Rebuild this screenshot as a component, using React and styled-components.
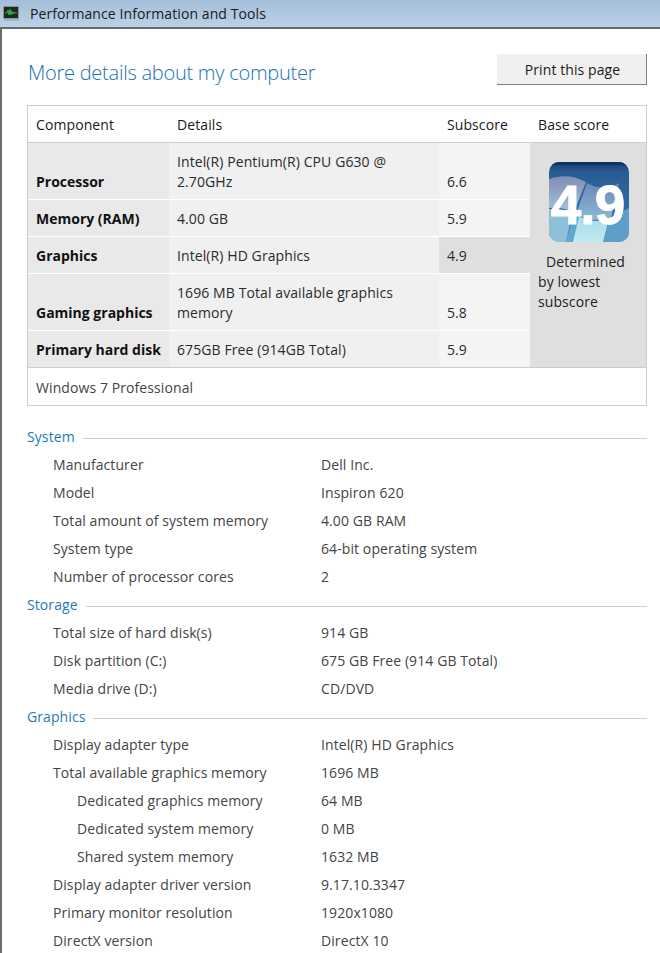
import React from "react";
import styled, { createGlobalStyle } from "styled-components";

const Global = createGlobalStyle`
  html, body { margin: 0; padding: 0; background: #fff; height: 953px; overflow: hidden; }
  body { font-family: "Open Sans", "Noto Sans", "Liberation Sans", sans-serif; font-size: 14px; letter-spacing: 0.09px; color: #111; }
`;

const Page = styled.div`
  width: 660px;
  height: 953px;
  overflow: hidden;
  display: flex;
  flex-direction: column;
`;
const TitleBar = styled.header`
  flex: none;
  height: 27px;
  display: flex;
  align-items: center;
  gap: 10px;
  padding-left: 3px;
  background: linear-gradient(#a4bdd9, #bcd1e7);
  border-bottom: 2px solid #6b6b6b;
  color: #1a1a1a;
  font-size: 14px;
`;
const Body = styled.main`
  flex: 1;
  border-left: 2px solid #6b6b6b;
  padding: 25px 13px 0 25px;
  display: flex;
  flex-direction: column;
`;
const TopRow = styled.div`
  display: flex;
  justify-content: space-between;
  align-items: flex-start;
  height: 51px;
`;
const Heading = styled.h1`
  margin: 5px 0 0 1px;
  font-size: 20px;
  line-height: 28px;
  font-weight: 300;
  letter-spacing: -0.25px;
  color: #1872b4;
`;
const PrintButton = styled.button`
  width: 150px;
  height: 31px;
  padding: 1px 0 0 2px;
  border: none;
  border-right: 1px solid #7d7d7d;
  border-bottom: 1px solid #7d7d7d;
  background: #f0f0f0;
  font: inherit;
  letter-spacing: inherit;
  color: #1a1a1a;
`;
const Card = styled.section`
  border: 1px solid #cdcdcd;
  display: grid;
  grid-template-columns: 141px 270px 91px 116px;
  grid-template-rows: 36px repeat(5, auto) 37px;
  row-gap: 1px;
  background: #fff;
`;
const HeadCell = styled.div`
  padding: 9px 8px 7px;
  line-height: 20px;
  border-bottom: 1px solid #cdcdcd;
  height: 37px;
  margin-bottom: -1px;
  box-sizing: border-box;
  color: #1a1a1a;
`;
const Cell = styled.div`
  padding: 9px 8px 7px;
  line-height: 20px;
  display: flex;
  align-items: flex-end;
  background: ${p => p.$bg};
  font-weight: ${p => (p.$bold ? 700 : 400)};
  letter-spacing: ${p => (p.$bold ? "0" : "inherit")};
  color: ${p => (p.$bold ? "#111" : "#2b2b2b")};
`;
const BaseCell = styled.div`
  grid-column: 4;
  grid-row: 2 / span 5;
  background: #dfdfdf;
  display: flex;
  flex-direction: column;
  padding: 19px 8px 0;
  color: #222;
  line-height: 20px;
`;
const Badge = styled.div`
  position: relative;
  width: 80px;
  height: 80px;
  margin: 0 0 10px 11px;
`;
const BadgeArt = styled.svg`
  display: block;
`;
const BadgeScore = styled.span`
  position: absolute;
  inset: 6px 3px 0 0;
  display: flex;
  align-items: center;
  justify-content: center;
  font-family: "Liberation Sans", sans-serif;
  font-size: 55px;
  font-weight: 700;
  letter-spacing: -1px;
  -webkit-text-stroke: 0.8px #fff;
  color: #fff;
`;
const Note = styled.p`
  margin: 0;
  text-indent: 8px;
`;
const Edition = styled.div`
  grid-column: 1 / -1;
  padding: 2px 8px 0;
  border-top: 1px solid #cdcdcd;
  display: flex;
  align-items: center;
  color: #444;
  margin-top: -1px;
`;
const Sections = styled.div`
  margin-top: 16px;
  display: flex;
  flex-direction: column;
`;
const SectionTitle = styled.div`
  height: 28px;
  display: flex;
  align-items: center;
  gap: 8px;
  color: #1f7bb8;
  &::after {
    content: "";
    flex: 1;
    height: 1px;
    margin-top: 4px;
    background: #cdcdcd;
  }
`;
const Row = styled.div`
  height: 28px;
  display: grid;
  grid-template-columns: ${p => (p.$indent ? "244px" : "268px")} 1fr;
  align-items: center;
  padding-left: ${p => (p.$indent ? "50px" : "26px")};
  color: #444;
`;

const Monitor = () => (
  <svg width="17" height="15" viewBox="0 0 17 15">
    <rect x="0.5" y="0.5" width="15" height="12" rx="1" fill="#1c2a20" stroke="#8a9696" />
    <path d="M2 7h2l1-3 1 5 1-6 1 6 1-4 1 3 1-2 1 1h2" fill="none" stroke="#35b048" strokeWidth="1" />
    <path d="M1 13.5h15l1 1H2z" fill="#8d9aa6" />
  </svg>
);

const BadgeGraphic = () => (
  <BadgeArt width="80" height="80" viewBox="0 0 80 80">
    <defs>
      <linearGradient id="bg" x1="0" y1="0" x2="0" y2="1">
        <stop offset="0" stopColor="#143f70" />
        <stop offset="0.12" stopColor="#2a5a92" />
        <stop offset="0.6" stopColor="#2f6ca6" />
        <stop offset="1" stopColor="#4f9fca" />
      </linearGradient>
      <linearGradient id="paneA" x1="0" y1="0" x2="0" y2="1">
        <stop offset="0" stopColor="#7f8db5" />
        <stop offset="1" stopColor="#a4c4dc" />
      </linearGradient>
      <linearGradient id="paneB" x1="0" y1="0" x2="0" y2="1">
        <stop offset="0" stopColor="#6a8ab8" />
        <stop offset="1" stopColor="#8db8d6" />
      </linearGradient>
      <linearGradient id="paneC" x1="0" y1="0" x2="0" y2="1">
        <stop offset="0" stopColor="#a5dbe8" />
        <stop offset="1" stopColor="#c2e9f1" />
      </linearGradient>
      <clipPath id="round">
        <rect width="80" height="80" rx="10" />
      </clipPath>
    </defs>
    <g clipPath="url(#round)">
      <rect width="80" height="80" fill="url(#bg)" />
      <path d="M0 17 C12 13 24 13 37 20 L25 50 C16 46 8 45 0 46 Z" fill="url(#paneA)" />
      <path d="M38 21 C48 27 60 27 70 21 L62 56 C50 60 38 58 27 52 Z" fill="url(#paneB)" />
      <path d="M0 47 C8 46 16 47 23 51 L17 80 H0 Z" fill="#8fc0da" />
      <path d="M17 80 L25 52 L30 54 L24 80 Z" fill="#5fa8cf" />
      <path d="M30 54 C40 60 50 60 60 57 L54 80 H24 Z" fill="url(#paneC)" />
      <path d="M61 56 L80 46 V80 H54 Z" fill="#5d9fc8" />
      <rect x="0" y="0" width="80" height="3" fill="#0f3460" />
    </g>
  </BadgeArt>
);

const rows = [
  { c: "Processor", d: "Intel(R) Pentium(R) CPU G630 @ 2.70GHz", s: "6.6" },
  { c: "Memory (RAM)", d: "4.00 GB", s: "5.9" },
  { c: "Graphics", d: "Intel(R) HD Graphics", s: "4.9", low: true },
  { c: "Gaming graphics", d: "1696 MB Total available graphics memory", s: "5.8" },
  { c: "Primary hard disk", d: "675GB Free (914GB Total)", s: "5.9" },
];

const sections = [
  {
    title: "System",
    items: [
      ["Manufacturer", "Dell Inc."],
      ["Model", "Inspiron 620"],
      ["Total amount of system memory", "4.00 GB RAM"],
      ["System type", "64-bit operating system"],
      ["Number of processor cores", "2"],
    ],
  },
  {
    title: "Storage",
    items: [
      ["Total size of hard disk(s)", "914 GB"],
      ["Disk partition (C:)", "675 GB Free (914 GB Total)"],
      ["Media drive (D:)", "CD/DVD"],
    ],
  },
  {
    title: "Graphics",
    items: [
      ["Display adapter type", "Intel(R) HD Graphics"],
      ["Total available graphics memory", "1696 MB"],
      ["Dedicated graphics memory", "64 MB", true],
      ["Dedicated system memory", "0 MB", true],
      ["Shared system memory", "1632 MB", true],
      ["Display adapter driver version", "9.17.10.3347"],
      ["Primary monitor resolution", "1920x1080"],
      ["DirectX version", "DirectX 10"],
    ],
  },
];

export default function App() {
  return (
    <Page>
      <Global />
      <TitleBar>
        <Monitor />
        <span>Performance Information and Tools</span>
      </TitleBar>
      <Body>
        <TopRow>
          <Heading>More details about my computer</Heading>
          <PrintButton>Print this page</PrintButton>
        </TopRow>
        <Card>
          <HeadCell>Component</HeadCell>
          <HeadCell>Details</HeadCell>
          <HeadCell>Subscore</HeadCell>
          <HeadCell>Base score</HeadCell>
          {rows.map(r => (
            <React.Fragment key={r.c}>
              <Cell $bg="#e9e9e9" $bold>{r.c}</Cell>
              <Cell $bg="#f0f0f0">{r.d}</Cell>
              <Cell $bg={r.low ? "#dfdfdf" : "#f4f4f4"}>{r.s}</Cell>
            </React.Fragment>
          ))}
          <BaseCell>
            <Badge>
              <BadgeGraphic />
              <BadgeScore>4.9</BadgeScore>
            </Badge>
            <Note>Determined by lowest subscore</Note>
          </BaseCell>
          <Edition>Windows 7 Professional</Edition>
        </Card>
        <Sections>
          {sections.map(s => (
            <React.Fragment key={s.title}>
              <SectionTitle>{s.title}</SectionTitle>
              {s.items.map(([k, v, indent]) => (
                <Row key={k} $indent={indent}>
                  <span>{k}</span>
                  <span>{v}</span>
                </Row>
              ))}
            </React.Fragment>
          ))}
        </Sections>
      </Body>
    </Page>
  );
}
